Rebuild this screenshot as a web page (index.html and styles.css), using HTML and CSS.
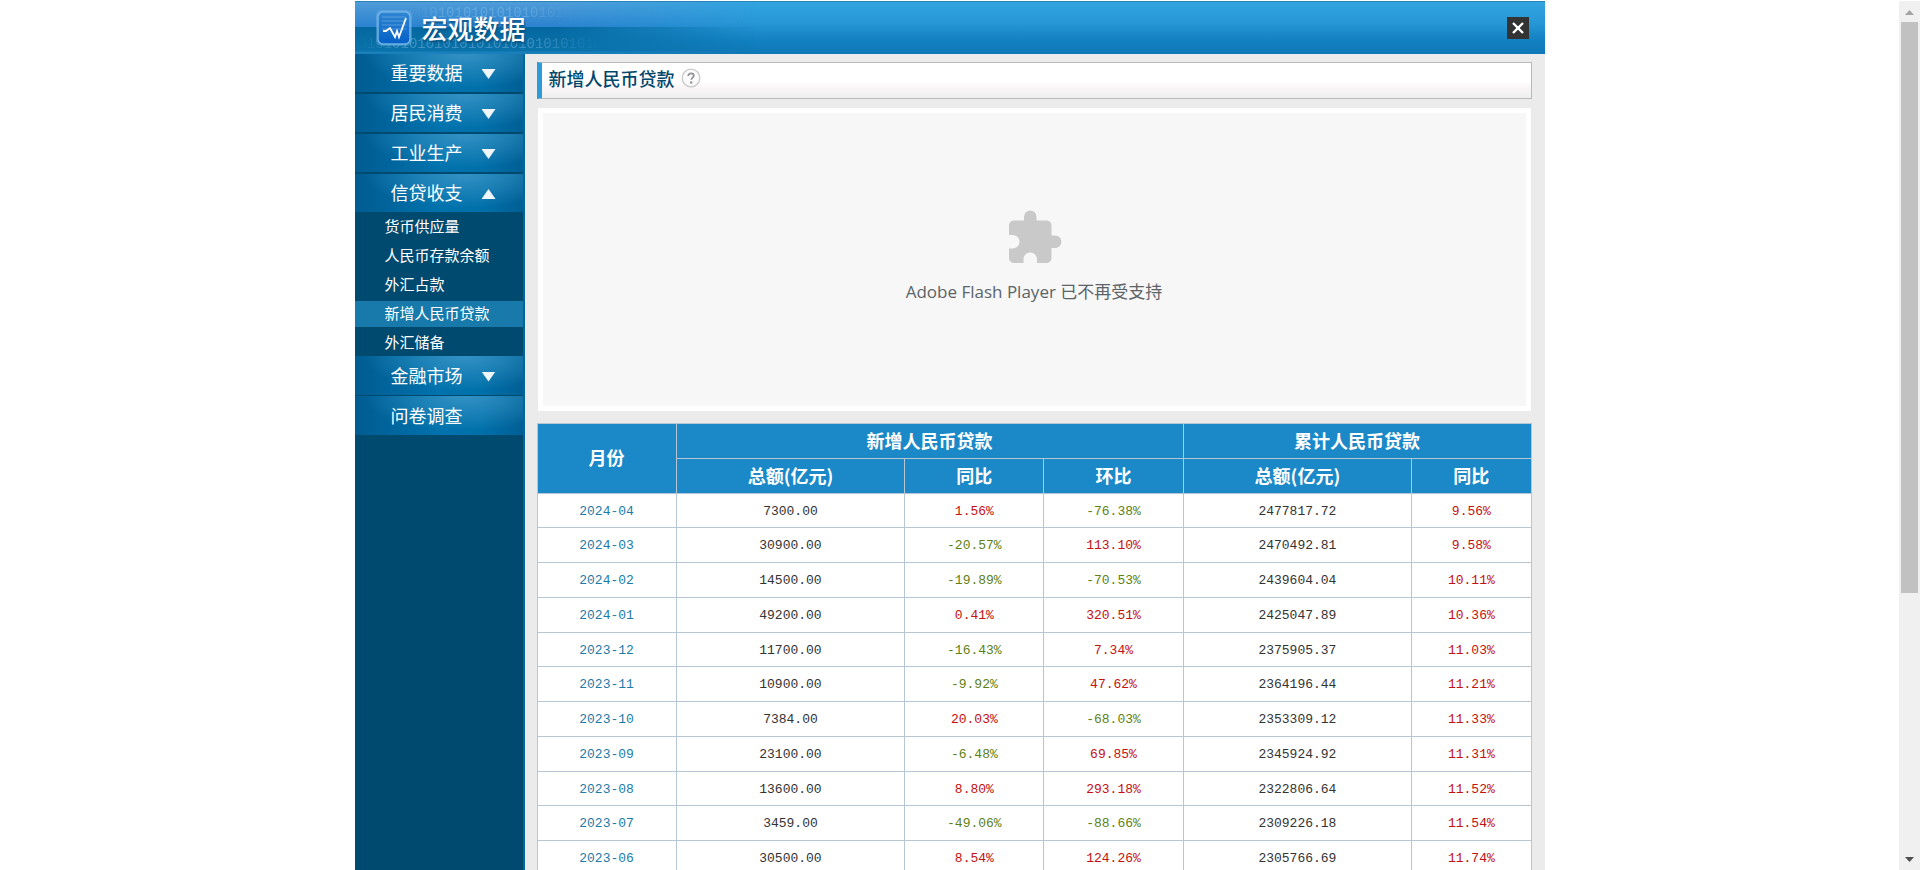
FILE: index.html
```html
<!DOCTYPE html>
<html lang="zh-CN">
<head>
<meta charset="utf-8">
<title>宏观数据</title>
<link rel="stylesheet" href="styles.css">
</head>
<body>
<div class="viewport">
<div class="page">
  <header class="header">
    <div class="banner" aria-hidden="true">
      <span class="bits bits-top">0101010101010101010</span>
      <span class="bits bits-bottom">01010101010101010101010101010</span>
    </div>
    <svg class="logo" viewBox="0 0 38 38" aria-hidden="true">
      <defs>
        <linearGradient id="tile" x1="0" y1="0" x2="0" y2="1">
          <stop offset="0" stop-color="#2f86d2"/><stop offset="1" stop-color="#0560c6"/>
        </linearGradient>
      </defs>
      <rect x="1" y="1" width="36" height="36" rx="6" fill="#8cc4f0" opacity=".35"/>
      <rect x="3" y="3" width="32" height="32" rx="5" fill="url(#tile)" stroke="#6fb4e8" stroke-width="1.5"/>
      <path d="M7 8h24M7 12h24M7 16h24M7 20h24" stroke="#8ab9e8" stroke-width="1" opacity=".5"/>
      <path d="M8 22h3l4-3 5 9 2-6 2 6 7-19" fill="none" stroke="#fff" stroke-width="1.8"/>
    </svg>
    <h1 class="brand">宏观数据</h1>
    <button class="close" type="button" aria-label="关闭">
      <svg viewBox="0 0 22 22" aria-hidden="true"><path d="M6 6l10 10M16 6L6 16" stroke="#fff" stroke-width="2.4"/><circle cx="11" cy="11" r="2" fill="#fff"/></svg>
    </button>
  </header>
  <div class="body">
    <nav class="sidebar">
      <button class="group" type="button">重要数据<span class="arrow down"></span></button>
      <button class="group" type="button">居民消费<span class="arrow down"></span></button>
      <button class="group" type="button">工业生产<span class="arrow down"></span></button>
      <button class="group open" type="button">信贷收支<span class="arrow up"></span></button>
      <ul class="sub">
        <li><a href="#">货币供应量</a></li>
        <li><a href="#">人民币存款余额</a></li>
        <li><a href="#">外汇占款</a></li>
        <li><a href="#" class="current">新增人民币贷款</a></li>
        <li><a href="#">外汇储备</a></li>
      </ul>
      <button class="group after" type="button">金融市场<span class="arrow down"></span></button>
      <button class="group after" type="button">问卷调查</button>
    </nav>
    <main class="main">
      <div class="title">
        <h2>新增人民币贷款</h2>
        <svg class="help" viewBox="0 0 20 20" role="img" aria-label="帮助">
          <circle cx="10" cy="10" r="8.8" fill="#fbfbfb" stroke="#c8c8c8" stroke-width="1.3"/>
          <path d="M7.200 8c0-1.700 1.200-2.700 2.800-2.700s2.800 1 2.800 2.500c0 1.800-2.500 1.900-2.500 4" fill="none" stroke="#8f8f96" stroke-width="1.700"/>
          <circle cx="10.200" cy="14.500" r="1.200" fill="#8f8f96"/>
        </svg>
      </div>
      <div class="flash">
        <svg class="puzzle" viewBox="0 0 24 24" aria-hidden="true"><path fill="#c9c9c9" d="M20.500 11H19V7c0-1.100-.9-2-2-2h-4V3.500a2.500 2.500 0 0 0-5 0V5H4c-1.100 0-1.990.9-1.990 2v3.800H3.500c1.490 0 2.700 1.210 2.700 2.700s-1.210 2.700-2.700 2.700H2V20c0 1.100.9 2 2 2h3.800v-1.500c0-1.490 1.210-2.700 2.700-2.700s2.700 1.210 2.700 2.700V22H17c1.100 0 2-.9 2-2v-4h1.500a2.500 2.500 0 0 0 0-5z"/></svg>
        <p>Adobe Flash Player 已不再受支持</p>
      </div>
      <table class="data">
        <colgroup><col class="c-month"><col class="c-sum"><col class="c-pct"><col class="c-pct"><col class="c-sum"><col class="c-last"></colgroup>
        <thead>
          <tr><th rowspan="2">月份</th><th colspan="3">新增人民币贷款</th><th colspan="2">累计人民币贷款</th></tr>
          <tr><th>总额(亿元)</th><th>同比</th><th>环比</th><th>总额(亿元)</th><th>同比</th></tr>
        </thead>
        <tbody>
          <tr><td class="month">2024-04</td><td>7300.00</td><td class="up-v">1.56%</td><td class="down-v">-76.38%</td><td>2477817.72</td><td class="up-v">9.56%</td></tr>
          <tr><td class="month">2024-03</td><td>30900.00</td><td class="down-v">-20.57%</td><td class="up-v">113.10%</td><td>2470492.81</td><td class="up-v">9.58%</td></tr>
          <tr><td class="month">2024-02</td><td>14500.00</td><td class="down-v">-19.89%</td><td class="down-v">-70.53%</td><td>2439604.04</td><td class="up-v">10.11%</td></tr>
          <tr><td class="month">2024-01</td><td>49200.00</td><td class="up-v">0.41%</td><td class="up-v">320.51%</td><td>2425047.89</td><td class="up-v">10.36%</td></tr>
          <tr><td class="month">2023-12</td><td>11700.00</td><td class="down-v">-16.43%</td><td class="up-v">7.34%</td><td>2375905.37</td><td class="up-v">11.03%</td></tr>
          <tr><td class="month">2023-11</td><td>10900.00</td><td class="down-v">-9.92%</td><td class="up-v">47.62%</td><td>2364196.44</td><td class="up-v">11.21%</td></tr>
          <tr><td class="month">2023-10</td><td>7384.00</td><td class="up-v">20.03%</td><td class="down-v">-68.03%</td><td>2353309.12</td><td class="up-v">11.33%</td></tr>
          <tr><td class="month">2023-09</td><td>23100.00</td><td class="down-v">-6.48%</td><td class="up-v">69.85%</td><td>2345924.92</td><td class="up-v">11.31%</td></tr>
          <tr><td class="month">2023-08</td><td>13600.00</td><td class="up-v">8.80%</td><td class="up-v">293.18%</td><td>2322806.64</td><td class="up-v">11.52%</td></tr>
          <tr><td class="month">2023-07</td><td>3459.00</td><td class="down-v">-49.06%</td><td class="down-v">-88.66%</td><td>2309226.18</td><td class="up-v">11.54%</td></tr>
          <tr><td class="month">2023-06</td><td>30500.00</td><td class="up-v">8.54%</td><td class="up-v">124.26%</td><td>2305766.69</td><td class="up-v">11.74%</td></tr>
        </tbody>
      </table>
    </main>
  </div>
</div>
</div>
<div class="scrollbar" aria-hidden="true">
  <svg viewBox="0 0 9 5"><path d="M0 5L4.500 0L9 5z" fill="#a3a3a3"/></svg>
  <div class="track"><div class="thumb"></div></div>
  <svg viewBox="0 0 9 5"><path d="M0 0L4.500 5L9 0z" fill="#505050"/></svg>
</div>
</body>
</html>
```
FILE: styles.css
```css
* { box-sizing: border-box; }
body {
  margin: 0;
  display: flex;
  height: 100vh;
  overflow: hidden;
  background: #fff;
  color: #333;
  font-family: "Noto Sans CJK SC", sans-serif;
}
h1, h2, p, ul { margin: 0; padding: 0; }
button { font: inherit; border: 0; padding: 0; }

.viewport { flex: 1; overflow: hidden; padding-top: 1px; }
.page {
  max-width: 1190px;
  min-height: 100%;
  margin: 0 auto;
  display: flex;
  flex-direction: column;
}

/* header */
.header {
  position: relative;
  display: flex;
  align-items: center;
  height: 53px;
  padding: 0 16px 0 20px;
  border-top: 1px solid #2583b8;
  background: linear-gradient(#32a4e0, #2797d6 40%, #1280c0 75%, #0f78b6);
}
.banner {
  position: absolute;
  inset: 0 auto 0 0;
  width: 400px;
  overflow: hidden;
  background: linear-gradient(#4f9cd8, #2b82cf 25px, #0568a0 25px, #0a72aa 49px, #1a80bb 50px);
  -webkit-mask-image: linear-gradient(90deg, #000 50%, transparent);
  mask-image: linear-gradient(90deg, #000 50%, transparent);
}
.bits {
  position: absolute;
  color: #8fc4ea;
  font: 14px/12px "Liberation Mono", monospace;
  opacity: .4;
  -webkit-mask-image: linear-gradient(90deg, transparent, #000 20%, #000 70%, transparent);
  mask-image: linear-gradient(90deg, transparent, #000 20%, #000 70%, transparent);
}
.bits-top { left: 58px; top: 5px; }
.bits-bottom { left: 4px; top: 36px; }
.logo { position: relative; width: 38px; height: 38px; }
.brand {
  position: relative;
  flex: 1;
  margin-left: 9px;
  color: #fff;
  font-size: 26px;
  line-height: 28px;
  font-weight: 500;
  text-shadow: 1px 2px 2px #07517f;
}
.close { width: 22px; height: 22px; background: #333; }
.close svg { display: block; }

/* layout */
.body { flex: 1; display: flex; }
.sidebar {
  width: 170px;
  flex: none;
  background: #004a70;
  border-right: 2px solid #00669b;
}
.group {
  display: flex;
  align-items: center;
  gap: 19px;
  width: 100%;
  height: 40px;
  padding: 0 0 2px 36px;
  border-bottom: 2px solid #004a70;
  color: #fff;
  font-size: 18px;
  line-height: 24px;
  text-align: left;
  background:
    radial-gradient(ellipse 60% 90% at 65% 0, #3391c3, transparent),
    linear-gradient(90deg, #005c91, #0072ad 50%, #0070aa 75%, #005f94);
}
.group.open { height: 38px; border-bottom: 0; }
.group.after { border-bottom-width: 1px; }
.arrow { width: 14px; height: 10px; margin-top: 4px; background: #f0f7fb; }
.down { clip-path: polygon(0 0, 100% 0, 50% 100%); }
.up { clip-path: polygon(50% 0, 100% 100%, 0 100%); }
.sub {
  display: flex;
  flex-direction: column;
  gap: 3px;
  padding-top: 2px;
  list-style: none;
}
.sub a {
  display: block;
  padding: 0 0 2px 30px;
  color: #fff;
  font-size: 15px;
  line-height: 24px;
  text-decoration: none;
}
.sub .current { background: #177aab; }

.main { flex: 1; min-width: 0; padding: 8px 13px 0 12px; background: #ebebeb; }
.title {
  display: flex;
  align-items: center;
  gap: 6px;
  height: 37px;
  padding: 0 7px 5px;
  border: 1px solid #b8b8b8;
  border-left: 5px solid #2c9cd8;
  background: linear-gradient(#fff 55%, #fdf8f9 65%, #eee);
}
.title h2 { color: #00476b; font-size: 18px; line-height: 24px; font-weight: 500; }
.help { width: 20px; height: 20px; }
.flash {
  display: flex;
  flex-direction: column;
  align-items: center;
  justify-content: center;
  gap: 12px;
  height: 303px;
  margin: 9px 1px 12px;
  padding-bottom: 8px;
  border: 5px solid #fff;
  background: #f7f7f7;
}
.puzzle { width: 60px; height: 60px; }
.flash p {
  color: #5b6468;
  font-family: "Open Sans", "Noto Sans CJK SC", sans-serif;
  font-size: 17px;
  line-height: 24px;
}

/* table */
.data {
  width: 100%;
  table-layout: fixed;
  border-collapse: collapse;
  background: #fff;
  text-align: center;
}
.c-month, .c-pct { width: 14%; }
.c-sum { width: 23%; }
.c-last { width: 12%; }
.data th, .data td { border: 1px solid #b7c6d3; }
.data th {
  height: 35px;
  padding: 0 0 3px;
  background: #1b89c8;
  color: #fff;
  font-size: 18px;
  line-height: 24px;
  font-weight: 700;
}
.data td { height: 35px; padding: 2px 0 0; font: 13px/20px "Liberation Mono", monospace; }
.data tbody tr:nth-child(4n+1) td { height: 34px; }
.data .month { color: #1c7ba8; }
.data .up-v { color: #c4100f; }
.data .down-v { color: #5e7f12; }

/* scrollbar */
.scrollbar {
  display: flex;
  flex-direction: column;
  align-items: center;
  gap: 7px;
  width: 21px;
  margin-top: 1px;
  padding: 9px 0 8px;
  background: #f0f0f0;
}
.scrollbar svg { width: 9px; height: 5px; }
.track { flex: 1; width: 17px; }
.thumb { height: 69%; background: #c1c1c1; }
```
